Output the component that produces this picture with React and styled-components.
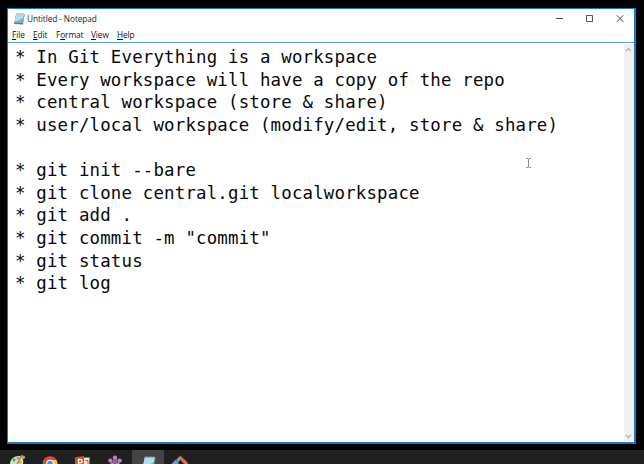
import React from "react";
import styled, { createGlobalStyle } from "styled-components";

const Global = createGlobalStyle`
  * { box-sizing: border-box; }
  body { margin: 0; background: #000; overflow: hidden; }
`;
const Desktop = styled.main`
  position: relative;
  width: 644px;
  height: 464px;
  padding: 8px 0 0 7px;
  background: #000;
  display: flex;
  flex-direction: column;
  justify-content: space-between;
  overflow: hidden;
`;
const Window = styled.section`
  width: 629px;
  height: 436px;
  border: 1px solid #1979c2;
  border-right-width: 2px;
  border-bottom-width: 2px;
  background: #fff;
  display: flex;
  flex-direction: column;
`;
const TitleBar = styled.header`
  height: 20px;
  flex: none;
  display: flex;
  align-items: center;
  justify-content: space-between;
  padding: 0 9px 0 5px;
`;
const Title = styled.div`
  display: flex;
  align-items: center;
  gap: 2px;
  font: 8.3px/10px "Open Sans", sans-serif;
  letter-spacing: -0.1px;
  color: #222;
`;
const Controls = styled.div`
  display: flex;
  gap: 20px;
`;
const MenuBar = styled.nav`
  height: 13px;
  flex: none;
  display: flex;
  align-items: center;
  padding: 0 0 1px 4px;
  font: 8.3px/10px "Open Sans", sans-serif;
  letter-spacing: -0.1px;
  color: #111;
`;
const MenuItem = styled.span`
  width: ${(p) => p.$w}px;
  white-space: nowrap;
`;
const Key = styled.u`
  text-underline-offset: 1px;
`;
const Body = styled.div`
  flex: 1;
  min-height: 0;
  display: flex;
  border-top: 1px solid #5b9fd6;
`;
const Editor = styled.div`
  flex: 1;
  padding: 3px 0 0 7px;
  font: 17.4px/22.65px "DejaVu Sans Mono", monospace;
  letter-spacing: 0.18px;
  color: #080808;
`;
const Line = styled.div`
  height: 22.65px;
  white-space: pre;
`;
const ScrollBar = styled.div`
  width: 10px;
  margin: 1px 0 1px 0;
  padding: 3px 1px 2px 0;
  background: #f0f0f0;
  display: flex;
  flex-direction: column;
  align-items: center;
  justify-content: space-between;
`;
const Taskbar = styled.footer`
  height: 14px;
  margin-left: -7px;
  background: #202020;
  display: flex;
  align-items: flex-start;
`;
const Task = styled.div`
  width: ${(p) => p.$w}px;
  height: 14px;
  padding-top: ${(p) => (p.$active ? 6 : 0)}px;
  display: flex;
  justify-content: center;
  overflow: hidden;
  background: ${(p) => (p.$active ? "#444446" : "transparent")};
`;
const Cursor = styled.svg`
  position: absolute;
  left: 525px;
  top: 157px;
`;

const MENUS = [
  ["", "F", "ile", 21],
  ["", "E", "dit", 23],
  ["F", "o", "rmat", 35],
  ["", "V", "iew", 26],
  ["", "H", "elp", 30],
];

const LINES = [
  "* In Git Everything is a workspace",
  "* Every workspace will have a copy of the repo",
  "* central workspace (store & share)",
  "* user/local workspace (modify/edit, store & share)",
  "",
  "* git init --bare",
  "* git clone central.git localworkspace",
  "* git add .",
  '* git commit -m "commit"',
  "* git status",
  "* git log",
];

const NotepadIcon = ({ size }) => (
  <svg width={size} height={size} viewBox="0 0 12 12">
    <path d="M3 1h8.2L9.5 11H1z" fill="#72b5cf" />
    <path d="M3 1h8.2l-.6 3.5L5 8 1.6 8z" fill="#b2dce8" />
    <path d="M1 11l.4-1.3L9.7 10 11.2 1l.5.4L10 11.4z" fill="#547f94" />
    <path d="M3.2.8h8" stroke="#849da6" strokeDasharray="1 .6" />
  </svg>
);
const Chevron = ({ down }) => (
  <svg width="7" height="5" viewBox="0 0 7 5">
    <path d={down ? "M1 1l2.5 2.5L6 1" : "M1 4l2.5-2.5L6 4"} fill="none" stroke="#b8b8b8" strokeWidth="1.3" />
  </svg>
);

export default function App() {
  return (
    <Desktop>
      <Global />
      <Window>
        <TitleBar>
          <Title><NotepadIcon size={12} />Untitled - Notepad</Title>
          <Controls>
            <svg width="10" height="8"><path d="M1 3.5h7" stroke="#555" /></svg>
            <svg width="10" height="8"><path d="M1.5.5h6v6h-6z" fill="none" stroke="#555" /></svg>
            <svg width="10" height="8"><path d="M2 .3l6.3 6.4M8.3.3L2 6.7" stroke="#444" /></svg>
          </Controls>
        </TitleBar>
        <MenuBar>
          {MENUS.map(([before, key, after, w]) => (
            <MenuItem key={after} $w={w}>{before}<Key>{key}</Key>{after}</MenuItem>
          ))}
        </MenuBar>
        <Body>
          <Editor>{LINES.map((t, i) => <Line key={i}>{t}</Line>)}</Editor>
          <ScrollBar><Chevron /><Chevron down /></ScrollBar>
        </Body>
      </Window>
      <Cursor width="7" height="13"><path d="M1 1.5h1.5l1 .5 1-.5H6M3.5 2v8M1 10.5h1.5l1-.5 1 .5H6" fill="none" stroke="#888" /></Cursor>
      <Taskbar>
        <Task $w={34}>
          <svg width="34" height="14" viewBox="0 0 34 14">
            <path d="M10 14c0-5 4-8 9-8 3 0 5 3 4 8z" fill="#d5dac5" />
            <circle cx="14" cy="10" r="1.4" fill="#4a9c60" /><circle cx="18" cy="8.3" r="1.3" fill="#6c9fc0" /><circle cx="20" cy="12" r="1.5" fill="#d69b50" />
            <path d="M17 14l5-9" stroke="#b98842" strokeWidth="1.4" /><circle cx="23.2" cy="7.3" r="1.8" fill="#c7a25b" />
          </svg>
        </Task>
        <Task $w={32}>
          <svg width="32" height="14" viewBox="0 0 32 14">
            <circle cx="16" cy="13.5" r="7.3" fill="#e84435" /><path d="M9.6 10l6.4 10H8z" fill="#38a35b" /><path d="M16 10h6.4a7 7 0 0 1 0 7H16z" fill="#f3c63d" /><circle cx="16" cy="13.5" r="3.8" fill="#fff" /><circle cx="16" cy="13.5" r="2.8" fill="#4a8cf0" />
          </svg>
        </Task>
        <Task $w={33}>
          <svg width="33" height="14" viewBox="0 0 33 14">
            <path d="M9 7.2l9-1.2v8H9z" fill="#d94b27" /><path d="M18 7h6v7h-6z" fill="#d94b27" /><path d="M18 8h5v6h-5z" fill="#f5e9e3" /><path d="M12.5 14V9.5h2a1.6 1.6 0 0 1 0 3.3h-2" stroke="#fff" fill="none" strokeWidth="1.3" /><path d="M19.5 10.5h2.5V14" stroke="#d94b27" fill="none" />
          </svg>
        </Task>
        <Task $w={33}>
          <svg width="33" height="14" viewBox="0 0 33 14" fill="#b884b8">
            <circle cx="16" cy="7.8" r="2.2" /><circle cx="11.4" cy="10.6" r="2.2" /><circle cx="20.6" cy="10.6" r="2.2" /><circle cx="16" cy="11.5" r="2.4" fill="#945f94" /><circle cx="13.2" cy="14.2" r="2" /><circle cx="18.8" cy="14.2" r="2" />
          </svg>
        </Task>
        <Task $w={32} $active><NotepadIcon size={15} /></Task>
        <Task $w={32}>
          <svg width="32" height="14" viewBox="0 0 32 14">
            <path d="M16 6l-3.8 3.8 2.2 2.2L18 8z" fill="#70b780" /><path d="M16.6 5.8L24.2 13l-1 1H20l-4.5-5z" fill="#df6657" /><path d="M11.8 9.6L7.5 14h6.8l.4-1.4z" fill="#6799dd" />
          </svg>
        </Task>
      </Taskbar>
    </Desktop>
  );
}
